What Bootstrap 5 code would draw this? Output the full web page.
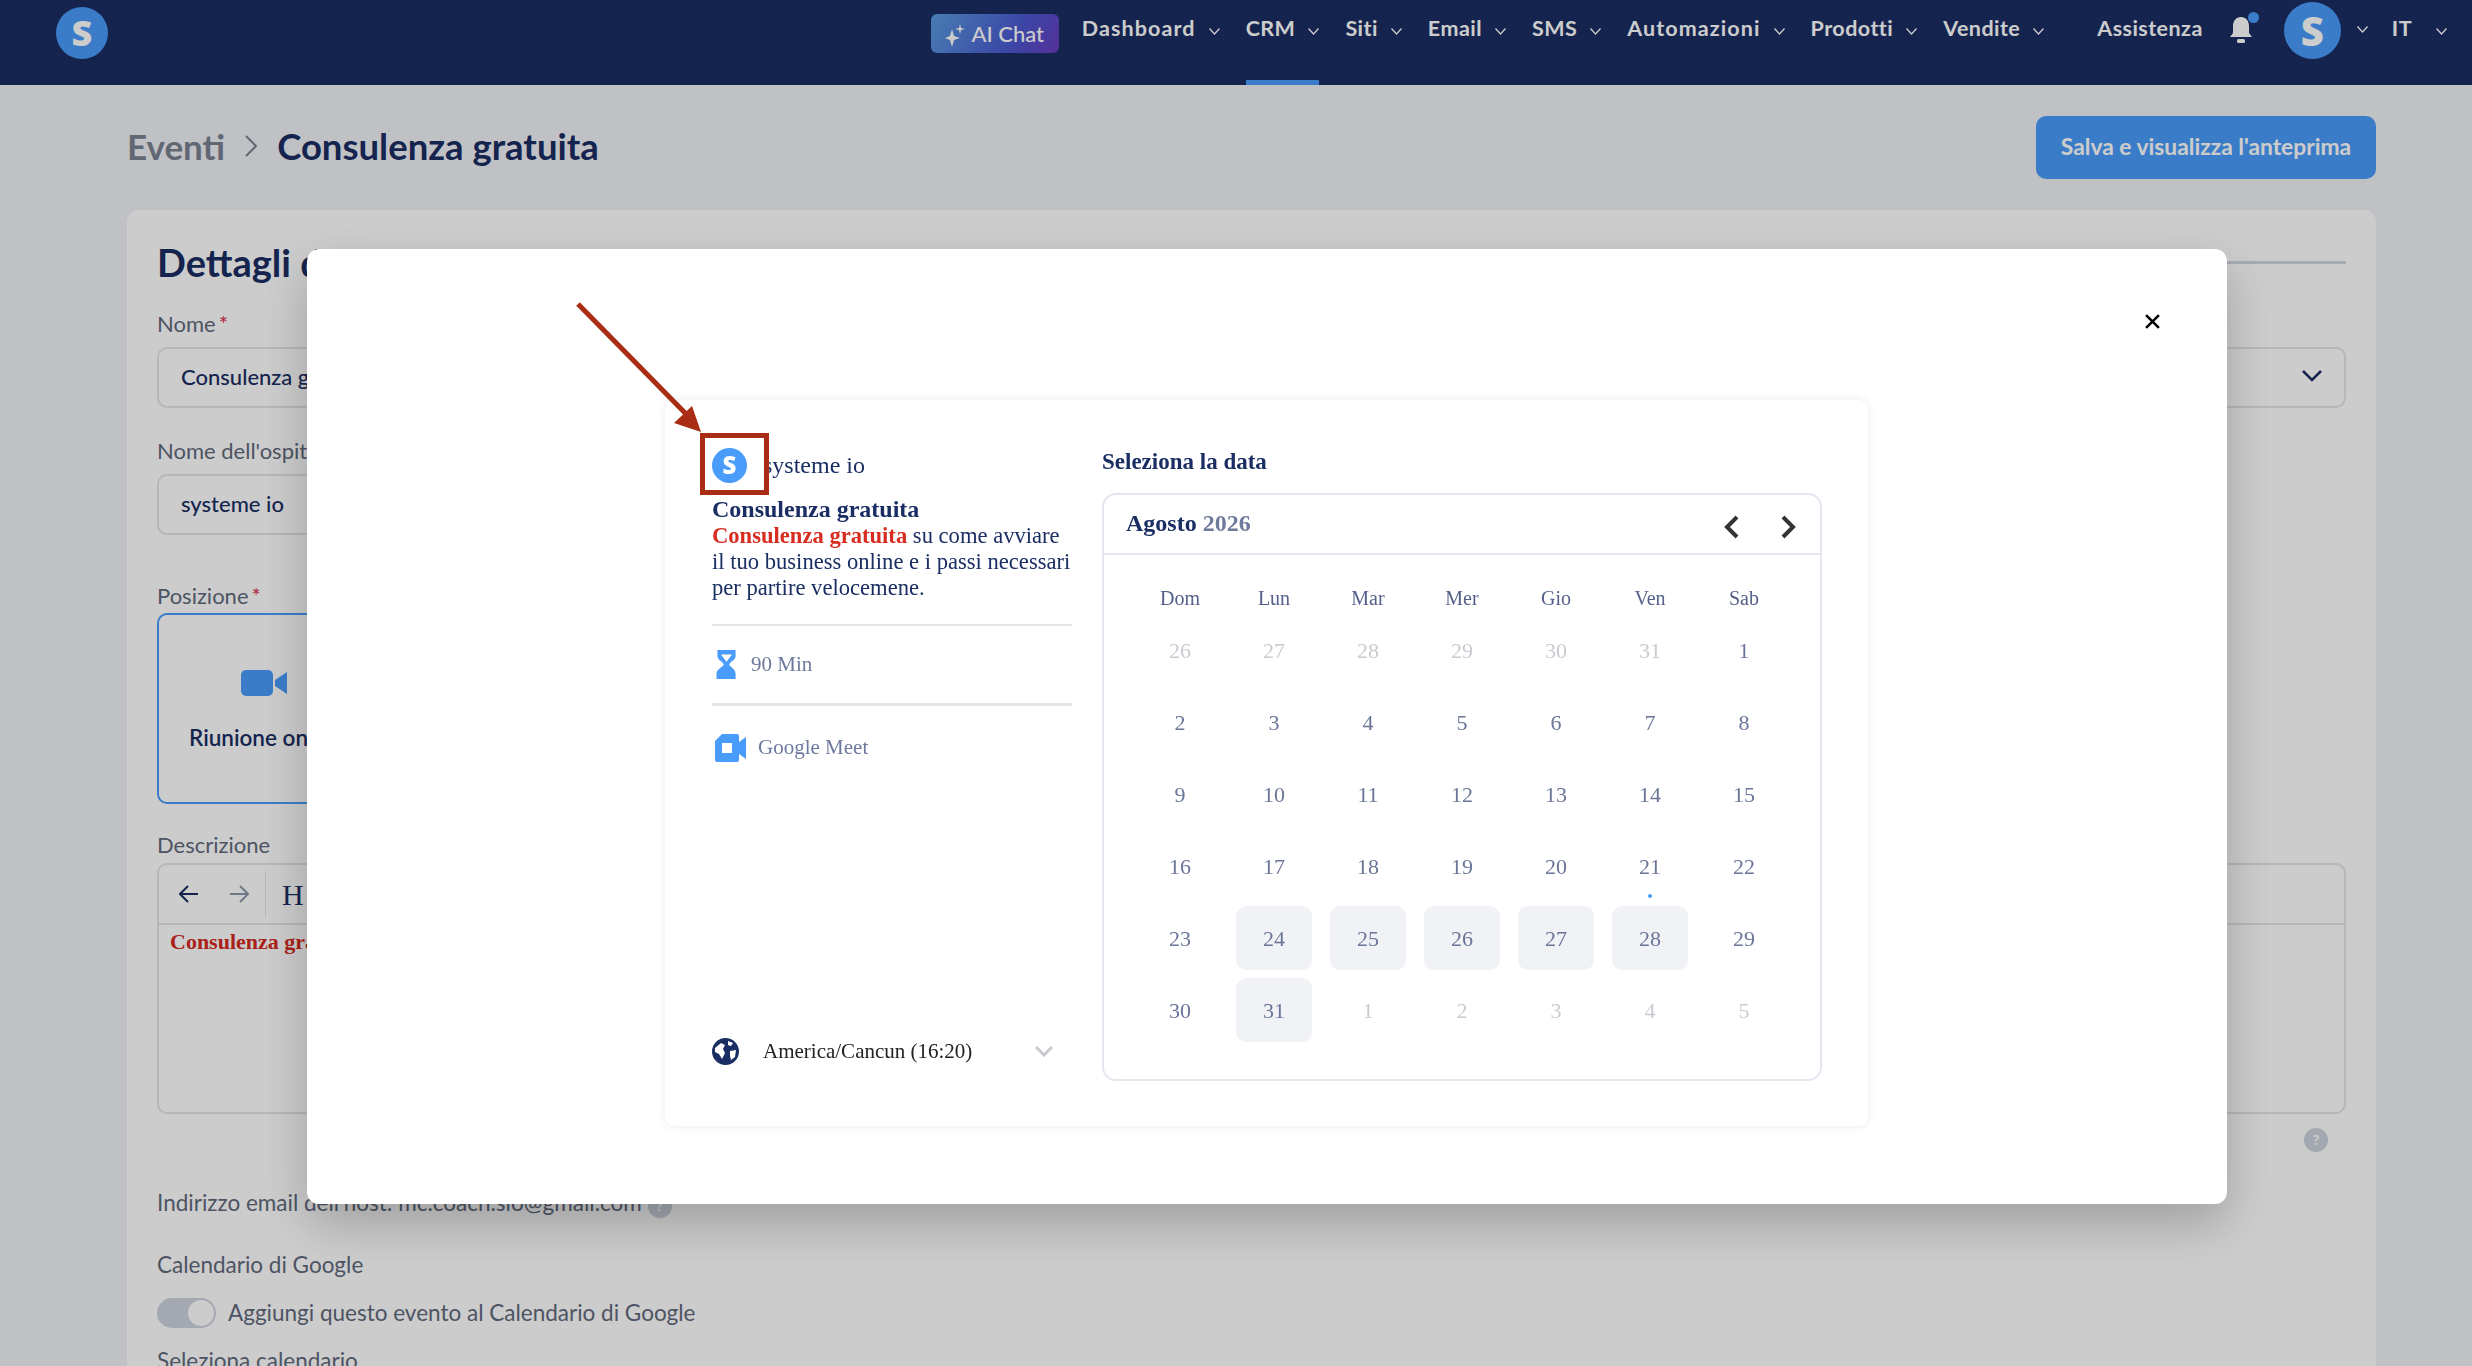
<!DOCTYPE html>
<html lang="it">
<head>
  <title>Consulenza gratuita</title>
  <meta charset="utf-8">
  <meta name="viewport" content="width=device-width, initial-scale=1">
  <link href="https://cdn.jsdelivr.net/npm/bootstrap@5.3.3/dist/css/bootstrap.min.css" rel="stylesheet">
  <script src="https://cdn.jsdelivr.net/npm/bootstrap@5.3.3/dist/js/bootstrap.bundle.min.js"></script>
  <style>
    html, body { height: 1366px; overflow: hidden; }
    body { background: #f1f2f7; font-family: Lato, "Liberation Sans", sans-serif; color: #1a2e63; }

    /* barra superiore */
    .top-bar { height: 85px; background: #1a2e63; padding: 0 25px 0 56px; }
    .logo-dot { border-radius: 50%; background: #4a9cfb; color: #fff; font-family: "Open Sans", sans-serif; font-weight: 800; display: flex; align-items: center; justify-content: center; flex: none; }
    .logo-top { width: 52px; height: 52px; font-size: 36px; margin-top: 7px; }
    .logo-user { width: 57px; height: 57px; font-size: 40px; margin-top: 2px; }
    .ai-btn { width: 128px; height: 39px; margin-top: 14px; margin-right: 23px; border-radius: 6px; background: linear-gradient(120deg, #5a9de0, #4a58d0 65%, #6a3cc0); color: #fff; font-size: 22px; font-weight: 500; }
    .top-item { color: #fff; font-size: 21.5px; font-weight: 700; letter-spacing: .45px; line-height: 1; height: 85px; padding-top: 18px; margin-right: 26px; border-bottom: 5px solid transparent; white-space: nowrap; }
    .top-item.on { border-bottom-color: #4a9cfb; }
    .top-item.wide-label { letter-spacing: 1.1px; }
    .top-item svg { margin-left: 13px; margin-top: 3px; }
    .top-item.lang-item svg { margin-left: 24px; }
    .top-help { margin-left: 27px; margin-right: 25px; }
    .bell-wrap { margin: 15px 26px 0 0; width: 30px; height: 30px; }
    .bell-dot { position: absolute; top: -3px; right: -1px; width: 11px; height: 11px; background: #4a9cfb; border-radius: 50%; }
    .chev-user { margin: 26px 24px 0 16px; }

    /* intestazione pagina */
    .page-head { padding: 30px 96px 0 127px; height: 125px; }
    .crumb-back { font-size: 35px; font-weight: 700; color: #7a8291; }
    .crumb-now { font-size: 36.5px; font-weight: 700; color: #1a2e63; }
    .crumb-gap { gap: 20px; }
    .save-btn { width: 340px; height: 63px; margin-top: 1px; border-radius: 10px; background: #4a9cfb; color: #fff; font-size: 22.8px; font-weight: 700; border: 0; padding-bottom: 3px; }

    /* scheda dettagli */
    .detail-card { margin: 0 96px 0 127px; background: #fff; border-radius: 12px; padding: 29px 30px 30px; height: 1300px; }
    .title-row { margin-bottom: 27px; }
    .detail-title { font-size: 38px; font-weight: 700; line-height: 46px; margin: 0; white-space: nowrap; }
    .detail-rule { height: 3px; background: #cfd6e0; }
    .field-label { font-size: 22px; color: #5f6a7c; line-height: 24px; margin-bottom: 6px; }
    .label-far { margin-bottom: 11px; }
    .label-tile { margin-bottom: 5px; }
    .field-label i { color: #e03050; font-style: normal; margin-left: 3px; }
    .field-box { height: 61px; border: 2px solid #e2e5ea; border-radius: 10px; padding: 0 22px 3px; font-size: 22px; font-weight: 500; margin-bottom: 31px; }
    .short-box { width: 900px; margin-bottom: 49px; }
    .place-tile { width: 400px; height: 191px; border: 2px solid #4a9cfb; border-radius: 10px; padding: 7px 0 0 30px; margin-bottom: 29px; font-size: 22.5px; font-weight: 600; }
    .video-mark { margin-left: 52px; margin-bottom: 25px; }
    .editor-box { height: 251px; border: 2px solid #e2e5ea; border-radius: 10px; }
    .editor-tools { height: 60px; border-bottom: 2px solid #e2e5ea; padding-left: 20px; gap: 30px; }
    .editor-sep { width: 1px; height: 46px; background: #e2e5ea; margin-left: -14px; }
    .editor-h { font-family: "Liberation Serif", serif; font-size: 30px; margin-left: -14px; }
    .editor-text { font-family: "Liberation Serif", serif; font-weight: 700; font-size: 22px; color: #d42a1e; padding: 0 11px; }
    .help-dot { width: 24px; height: 24px; border-radius: 50%; background: #cdd3dd; color: #fff; font-size: 14px; font-weight: 700; display: inline-flex; align-items: center; justify-content: center; }
    .help-row { height: 76px; padding: 13px 18px 0 0; }
    .plain-line { font-size: 22.5px; color: #5f6a7c; line-height: 26px; }
    .host-line { margin-bottom: 34px; }
    .gcal-line { margin-bottom: 20px; }
    .switch-line { margin-bottom: 20px; }
    .switch-pill { width: 59px; height: 30px; background: #cdd3dd; border-radius: 15px; position: relative; flex: none; }
    .switch-pill::after { content: ""; position: absolute; right: 2px; top: 2px; width: 26px; height: 26px; background: #fff; border-radius: 50%; }

    /* finestra sopra la pagina */
    .dim-layer { position: fixed; inset: 0; background: rgba(0, 0, 0, .2); }
    .event-modal { position: fixed; left: 307px; top: 249px; width: 1920px; height: 955px; background: #fff; border-radius: 12px; box-shadow: 0 20px 50px rgba(0, 0, 0, .22); padding: 151px 359px 0 358px; font-family: "Liberation Serif", serif; }
    .close-x { position: absolute; top: 65px; right: 67px; border: 0; background: none; padding: 0; line-height: 0; }
    .booking-card { height: 726px; border-radius: 10px; box-shadow: 0 0 8px rgba(30, 40, 80, .1); padding: 47px 46px 47px 47px; gap: 30px; }
    .side-col { width: 360px; flex: none; }
    .brand-row { font-size: 24px; gap: 16px; height: 36px; margin-bottom: 13px; }
    .logo-small { width: 35px; height: 35px; font-size: 24px; }
    .ev-title { font-size: 24px; font-weight: 700; line-height: 26px; }
    .ev-desc { font-size: 22.6px; line-height: 26px; margin-top: 1px; }
    .ev-desc b { color: #d92c20; }
    .meta-row { color: #6e7a9d; font-size: 21px; }
    .meta-one { height: 79px; border-top: 2px solid #e5e6ea; margin-top: 23px; padding-left: 4px; gap: 14px; }
    .meta-two { height: 84px; border-top: 3px solid #e5e6ea; padding: 2px 0 0 3px; gap: 12px; }
    .tz-row { font-size: 21px; color: #222; margin-bottom: 12px; gap: 24px; }
    .tz-chev { margin-right: 19px; }
    .main-col { flex: 1; }
    .pick-title { font-size: 23px; font-weight: 700; line-height: 30px; margin-bottom: 16px; }
    .month-box { border: 2px solid #e5e7f0; border-radius: 14px; height: 588px; }
    .month-head { height: 60px; border-bottom: 2px solid #e5e7f0; padding: 0 23px 0 22px; }
    .month-name { font-size: 24px; font-weight: 700; margin-top: -2px; }
    .month-name span { color: #6e7a9d; }
    .month-arrows { gap: 42px; margin-top: 5px; }
    .day-grid { display: grid; grid-template-columns: repeat(7, 76px); column-gap: 18px; padding: 27px 0 0 38px; }
    .week-name { height: 32px; line-height: 32px; margin-bottom: 4px; text-align: center; font-size: 20px; color: #54608a; }
    .day-cell { height: 64px; margin-bottom: 8px; display: flex; align-items: center; justify-content: center; font-size: 22px; color: #6a7598; border-radius: 10px; position: relative; }
    .day-cell.off { color: #c9cbd0; }
    .day-cell.open { background: #f1f2f6; }
    .today-dot { position: absolute; left: 36px; bottom: 0; width: 4px; height: 4px; background: #4a9cfb; border-radius: 50%; }

    /* annotazione */
    .note-layer { position: fixed; left: 0; top: 0; width: 2472px; height: 1366px; pointer-events: none; }
  </style>
</head>
<body>

<header class="top-bar d-flex align-items-start">
  <div class="logo-dot logo-top">S</div>
  <div class="ms-auto d-flex align-items-start">
    <div class="ai-btn d-flex align-items-center justify-content-center gap-1">
      <svg width="22" height="26" viewBox="0 0 22 26" fill="#fff"><path d="M7 8 9 15 15 17 9 19 7 26 5 19 0 17 5 15Z"/><path d="M15 3 16 7 20 8 16 9 15 13 14 9 10 8 14 7Z"/></svg>
      AI Chat
    </div>
    <div class="top-item wide-label">Dashboard<svg width="11" height="7" viewBox="0 0 11 7" fill="none" stroke="#fff" stroke-width="1.3"><path d="M.5.5 5.5 6 10.5.5"/></svg></div>
    <div class="top-item on">CRM<svg width="11" height="7" viewBox="0 0 11 7" fill="none" stroke="#fff" stroke-width="1.3"><path d="M.5.5 5.5 6 10.5.5"/></svg></div>
    <div class="top-item">Siti<svg width="11" height="7" viewBox="0 0 11 7" fill="none" stroke="#fff" stroke-width="1.3"><path d="M.5.5 5.5 6 10.5.5"/></svg></div>
    <div class="top-item">Email<svg width="11" height="7" viewBox="0 0 11 7" fill="none" stroke="#fff" stroke-width="1.3"><path d="M.5.5 5.5 6 10.5.5"/></svg></div>
    <div class="top-item">SMS<svg width="11" height="7" viewBox="0 0 11 7" fill="none" stroke="#fff" stroke-width="1.3"><path d="M.5.5 5.5 6 10.5.5"/></svg></div>
    <div class="top-item wide-label">Automazioni<svg width="11" height="7" viewBox="0 0 11 7" fill="none" stroke="#fff" stroke-width="1.3"><path d="M.5.5 5.5 6 10.5.5"/></svg></div>
    <div class="top-item">Prodotti<svg width="11" height="7" viewBox="0 0 11 7" fill="none" stroke="#fff" stroke-width="1.3"><path d="M.5.5 5.5 6 10.5.5"/></svg></div>
    <div class="top-item">Vendite<svg width="11" height="7" viewBox="0 0 11 7" fill="none" stroke="#fff" stroke-width="1.3"><path d="M.5.5 5.5 6 10.5.5"/></svg></div>
    <div class="top-item top-help">Assistenza</div>
    <div class="bell-wrap position-relative">
      <svg width="26" height="30" viewBox="0 0 26 30" fill="#fff"><path d="M13 2c5 0 8 4 8 9v7l3 4H2l3-4v-7c0-5 3-9 8-9Z"/><rect x="9" y="24" width="8" height="4" rx="1.5"/></svg>
      <span class="bell-dot"></span>
    </div>
    <div class="logo-dot logo-user">S</div>
    <svg class="chev-user" width="11" height="7" viewBox="0 0 11 7" fill="none" stroke="#fff" stroke-width="1.3"><path d="M.5.5 5.5 6 10.5.5"/></svg>
    <div class="top-item lang-item me-0">IT<svg width="11" height="7" viewBox="0 0 11 7" fill="none" stroke="#fff" stroke-width="1.3"><path d="M.5.5 5.5 6 10.5.5"/></svg></div>
  </div>
</header>

<div class="page-head d-flex justify-content-between align-items-start">
  <div class="d-flex align-items-center crumb-gap mt-1">
    <span class="crumb-back">Eventi</span>
    <svg width="12" height="22" viewBox="0 0 12 22" fill="none" stroke="#7a8291" stroke-width="2"><path d="M1 1 11 11 1 21"/></svg>
    <span class="crumb-now">Consulenza gratuita</span>
  </div>
  <button class="save-btn">Salva e visualizza l'anteprima</button>
</div>

<main class="detail-card">
  <div class="d-flex align-items-center gap-3 title-row">
    <h2 class="detail-title">Dettagli dell'evento</h2>
    <div class="detail-rule flex-grow-1"></div>
  </div>
  <div class="field-label label-far">Nome<i>*</i></div>
  <div class="field-box d-flex align-items-center justify-content-between">
    <span>Consulenza gratuita</span>
    <svg width="20" height="12" viewBox="0 0 20 12" fill="none" stroke="#1a2e63" stroke-width="2.5"><path d="M1 1 10 10 19 1"/></svg>
  </div>
  <div class="field-label label-far">Nome dell'ospite</div>
  <div class="field-box short-box d-flex align-items-center">systeme io</div>
  <div class="field-label label-tile">Posizione<i>*</i></div>
  <div class="place-tile d-flex flex-column justify-content-center">
    <svg class="video-mark" width="46" height="26" viewBox="0 0 46 26" fill="#4a9cfb"><rect width="32" height="26" rx="5"/><path d="M34 10 46 2V24L34 16Z"/></svg>
    Riunione online
  </div>
  <div class="field-label">Descrizione</div>
  <div class="editor-box">
    <div class="editor-tools d-flex align-items-center">
      <svg width="20" height="18" viewBox="0 0 20 18" fill="none" stroke="#1a2e63" stroke-width="2"><path d="M19 9H2M9 1 1 9l8 8"/></svg>
      <svg width="20" height="18" viewBox="0 0 20 18" fill="none" stroke="#8c97ab" stroke-width="2"><path d="M1 9h17M11 1l8 8-8 8"/></svg>
      <span class="editor-sep"></span>
      <span class="editor-h">H</span>
    </div>
    <div class="editor-text">Consulenza gratuita</div>
  </div>
  <div class="help-row text-end"><span class="help-dot">?</span></div>
  <div class="plain-line host-line">Indirizzo email dell'host: mc.coach.sio@gmail.com <span class="help-dot">?</span></div>
  <div class="plain-line gcal-line">Calendario di Google</div>
  <div class="d-flex align-items-center gap-2 switch-line">
    <span class="switch-pill me-1"></span>
    <span class="plain-line">Aggiungi questo evento al Calendario di Google</span>
  </div>
  <div class="plain-line">Seleziona calendario</div>
</main>

<div class="dim-layer"></div>

<div class="event-modal">
  <button class="close-x" aria-label="Chiudi">
    <svg width="15" height="15" viewBox="0 0 14 14" stroke="#000" stroke-width="2.4"><path d="M1 1 13 13M13 1 1 13"/></svg>
  </button>
  <div class="booking-card d-flex">
    <div class="side-col d-flex flex-column">
      <div class="brand-row d-flex align-items-center">
        <div class="logo-dot logo-small">S</div>
        <span>systeme io</span>
      </div>
      <div class="ev-title">Consulenza gratuita</div>
      <div class="ev-desc"><b>Consulenza gratuita</b> su come avviare il tuo business online e i passi necessari per partire velocemene.</div>
      <div class="meta-row meta-one d-flex align-items-center">
        <svg width="21" height="29" viewBox="0 0 22 32" fill="#4a9cfb"><path d="M1 0H21V7C21 11 15 13 14 16 15 19 21 21 21 26V32H0V26C0 21 7 19 8 16 7 13 1 11 1 7ZM5 5 11 13 17 5Z" fill-rule="evenodd"/></svg>
        90 Min
      </div>
      <div class="meta-row meta-two d-flex align-items-center">
        <svg width="31" height="28" viewBox="0 0 31 28" fill="#4a9cfb"><path d="M7 0H22a2 2 0 0 1 2 2V8L31 3V25L24 20V26a2 2 0 0 1-2 2H2a2 2 0 0 1-2-2V7ZM7 9V19H17V9Z" fill-rule="evenodd"/></svg>
        Google Meet
      </div>
      <div class="tz-row d-flex align-items-center mt-auto">
        <svg width="27" height="27" viewBox="0 0 27 27"><circle cx="13.5" cy="13.5" r="13.5" fill="#1a2e63"/><path d="M3 10 9 5 13 7 11 11 13 15 10 21 7 16 3 14ZM16 3 21 5 19 8 16 7ZM18 13 24 12 23 19 19 22 18 18Z" fill="#fff"/></svg>
        <span class="flex-grow-1">America/Cancun (16:20)</span>
        <svg class="tz-chev" width="18" height="11" viewBox="0 0 18 11" fill="none" stroke="#c8cad0" stroke-width="3"><path d="M1 1 9 9 17 1"/></svg>
      </div>
    </div>
    <div class="main-col">
      <div class="pick-title">Seleziona la data</div>
      <div class="month-box">
        <div class="month-head d-flex align-items-center justify-content-between">
          <div class="month-name">Agosto <span>2026</span></div>
          <div class="month-arrows d-flex">
            <svg width="16" height="24" viewBox="0 0 16 24" fill="none" stroke="#333" stroke-width="4"><path d="M14 2 4 12 14 22"/></svg>
            <svg width="16" height="24" viewBox="0 0 16 24" fill="none" stroke="#333" stroke-width="4"><path d="M2 2 12 12 2 22"/></svg>
          </div>
        </div>
        <div class="day-grid" id="day-grid"></div>
      </div>
    </div>
  </div>
</div>

<svg class="note-layer" viewBox="0 0 2472 1366">
  <rect x="702.5" y="435.5" width="64" height="57" fill="none" stroke="#a92d15" stroke-width="5"/>
  <path d="M578 304 690 418" stroke="#a92d15" stroke-width="5" fill="none"/>
  <path d="M701 432 692 406 674 423Z" fill="#a92d15"/>
</svg>

<script>
  // griglia del mese
  const grid = document.getElementById('day-grid');
  const names = ['Dom', 'Lun', 'Mar', 'Mer', 'Gio', 'Ven', 'Sab'];
  const days = [26, 27, 28, 29, 30, 31];
  for (let d = 1; d <= 31; d++) days.push(d);
  for (let d = 1; d <= 5; d++) days.push(d);
  names.forEach(n => {
    grid.insertAdjacentHTML('beforeend', `<div class="week-name">${n}</div>`);
  });
  days.forEach((d, i) => {
    let cls = 'day-cell';
    if (i < 6 || i > 36) cls += ' off';
    if (i > 28 && i < 34 || i === 36) cls += ' open';
    const dot = i === 26 ? '<span class="today-dot"></span>' : '';
    grid.insertAdjacentHTML('beforeend', `<div class="${cls}">${d}${dot}</div>`);
  });
</script>

</body>
</html>
